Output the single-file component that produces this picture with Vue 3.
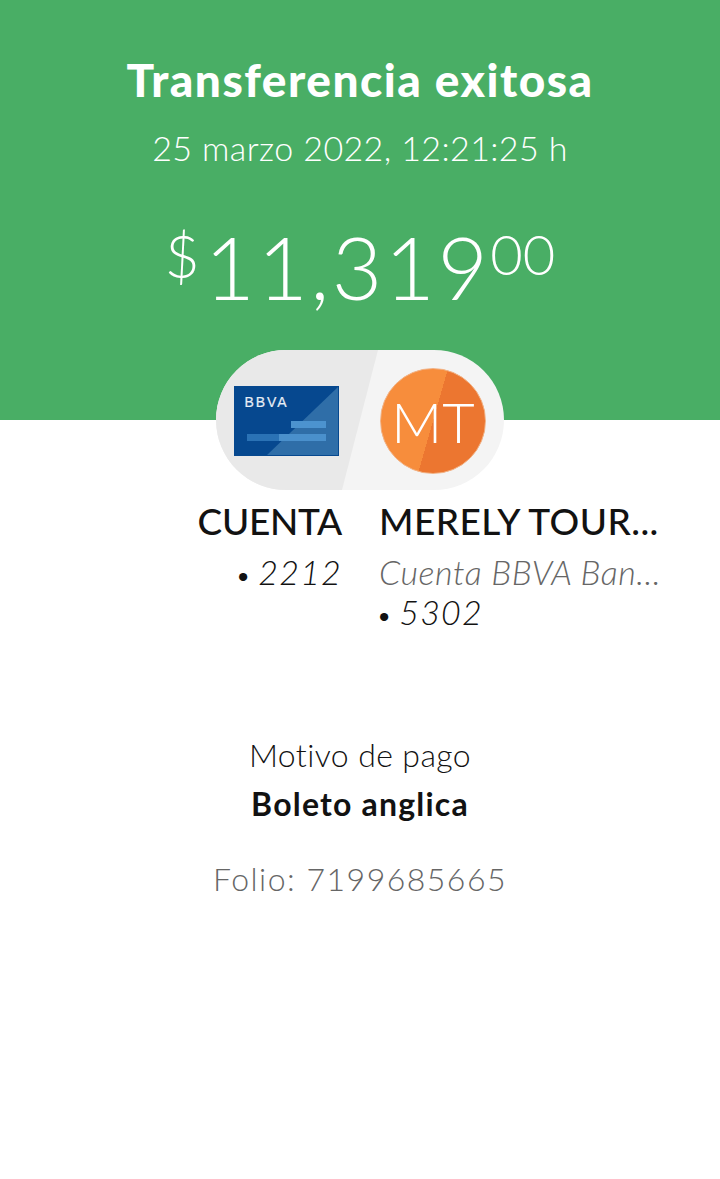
<script setup>
const title = 'Transferencia exitosa'
const date = '25 marzo 2022, 12:21:25 h'
</script>

<template>
  <main class="page">
    <header class="hero">
      <h1 class="title">{{ title }}</h1>
      <p class="date">{{ date }}</p>
      <p class="amount">
        <span class="cur">$</span><span class="int">11,319</span><span class="dec">00</span>
      </p>
    </header>

    <div class="pill">
      <div class="slot left">
        <svg class="card" width="105" height="70" viewBox="0 0 105 70">
          <rect width="105" height="70" fill="#06488f" />
          <path d="M104 1V69H33Z" fill="#2f6ea8" />
          <rect x="57" y="35" width="35" height="7" fill="#4c93cf" />
          <rect x="13" y="48" width="79" height="7" fill="#4a90cc" />
          <rect x="13" y="48" width="32" height="7" fill="#2a72b5" />
          <text x="10.5" y="21" class="logo">BBVA</text>
        </svg>
      </div>
      <div class="slot right">
        <div class="avatar"><span>MT</span></div>
      </div>
    </div>

    <section class="parties">
      <div class="party from">
        <div class="name">CUENTA</div>
        <div class="num"><span class="dot">•</span> 2212</div>
      </div>
      <div class="party to">
        <div class="name">MERELY TOUR...</div>
        <div class="bank">Cuenta BBVA Ban...</div>
        <div class="num"><span class="dot">•</span> 5302</div>
      </div>
    </section>

    <section class="detail">
      <div class="label">Motivo de pago</div>
      <div class="value">Boleto anglica</div>
      <div class="folio">Folio: 7199685665</div>
    </section>
  </main>
</template>

<style>
html, body { margin: 0; background: #fff; }
</style>

<style scoped>
.page {
  width: 720px;
  height: 1179px;
  overflow: hidden;
  background: #fff;
  font-family: Lato, "Liberation Sans", sans-serif;
  color: #121212;
}
.hero {
  height: 420px;
  box-sizing: border-box;
  padding-top: 52px;
  background: #49ae65;
  color: #fff;
  text-align: center;
}
.title {
  margin: 0;
  font-size: 46px;
  line-height: 56px;
  font-weight: 900;
  letter-spacing: 1.5px;
}
.date {
  margin: 20px 0 0;
  font-size: 34px;
  line-height: 40px;
  font-weight: 300;
  letter-spacing: 0.4px;
}
.amount {
  display: flex;
  justify-content: center;
  align-items: flex-start;
  margin: 55px 0 0;
  font-weight: 300;
  line-height: 1;
}
.cur { font-size: 60px; margin-top: 2px; margin-right: 5px; }
.int { font-size: 87px; letter-spacing: 2.4px; }
.dec { font-size: 56px; margin-top: 3px; }
.pill {
  position: relative;
  display: flex;
  width: 288px;
  height: 140px;
  box-sizing: border-box;
  padding-top: 2px;
  margin: -70px auto 0;
  border-radius: 70px;
  overflow: hidden;
  background: #f4f4f4;
}
.pill::before {
  content: "";
  position: absolute;
  inset: 0;
  background: #e9e9e9;
  clip-path: polygon(0 0, 162px 0, 126px 100%, 0 100%);
}
.slot { position: relative; display: flex; align-items: center; }
.left { width: 164px; padding-left: 18px; box-sizing: border-box; }
.right { flex: 1; }
.card { display: block; }
.logo {
  font-family: "Liberation Sans", sans-serif;
  font-size: 14px;
  fill: #e8eef6;
  stroke: #e8eef6;
  stroke-width: 0.2px;
  letter-spacing: 1.9px;
}
.avatar {
  width: 106px;
  height: 106px;
  box-sizing: border-box;
  display: flex;
  align-items: center;
  justify-content: center;
  border-radius: 50%;
  border: 1px solid #f1b184;
  background: linear-gradient(106deg, #f78d3c 0 50%, #ec7630 50% 100%);
  color: #fff;
  font-size: 56px;
  font-weight: 300;
}
.parties {
  display: grid;
  grid-template-columns: 342px 1fr;
  column-gap: 37px;
  padding-top: 9px;
}
.party { min-width: 0; }
.from { text-align: right; }
.name {
  font-size: 37px;
  line-height: 44px;
  font-weight: 500;
  white-space: nowrap;
}
.from .name { letter-spacing: -0.3px; }
.to .name { letter-spacing: 0.45px; }
.num, .bank {
  font-size: 34px;
  line-height: 40px;
  font-style: italic;
  font-weight: 300;
  white-space: nowrap;
  letter-spacing: 0.5px;
}
.num { letter-spacing: 1.2px; word-spacing: -4px; }
.from .name + .num, .bank { margin-top: 9px; }
.bank { color: #666; }
.dot { font-style: normal; font-size: 28px; margin-left: -3px; }
.detail {
  padding-top: 101px;
  text-align: center;
}
.label {
  font-size: 32px;
  line-height: 40px;
  font-weight: 300;
  letter-spacing: 0.4px;
}
.value {
  margin-top: 9px;
  font-size: 32px;
  line-height: 40px;
  font-weight: 700;
  letter-spacing: 1.2px;
}
.folio {
  margin-top: 35px;
  font-size: 32px;
  line-height: 40px;
  font-weight: 300;
  color: #666;
  letter-spacing: 1.5px;
}
</style>
